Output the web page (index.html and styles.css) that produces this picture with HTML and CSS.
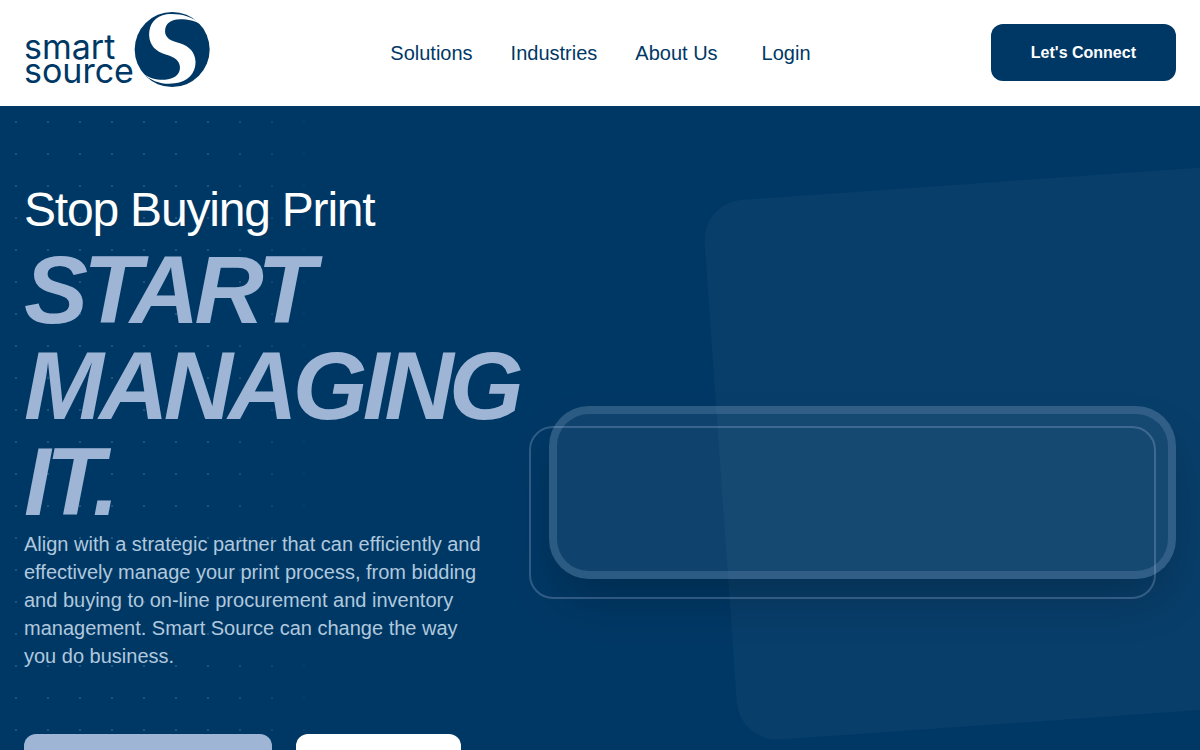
FILE: index.html
```html
<!DOCTYPE html>
<html lang="en">
<head>
<meta charset="utf-8">
<meta name="viewport" content="width=device-width, initial-scale=1">
<title>Smart Source</title>
<link rel="stylesheet" href="styles.css">
</head>
<body>
<header class="site-header">
  <a class="logo" href="#">
    <span class="wordmark"><span>smart</span><span>source</span></span>
    <svg class="mark" viewBox="402 36 228 226" aria-hidden="true">
      <circle cx="516.500" cy="149" r="113" fill="#003865"/>
      <path fill="#fff" d="M606 76C575 46 535 40 500 43C465 48 447 73 447 105C448 137 468 155 497 164C525 172 540 183 540 204C540 226 521 238 495 240C470 241 446 236 426 219C455 247 491 256 524 251C563 247 587 222 587 187C586 157 568 139 540 130C512 123 495 114 495 93C496 70 514 58 540 58C565 58 586 62 606 76Z"/>
    </svg>
  </a>
  <nav class="nav" aria-label="Main">
    <a href="#">Solutions</a>
    <a href="#">Industries</a>
    <a href="#">About Us</a>
    <a class="login" href="#">Login</a>
  </nav>
  <button class="connect" type="button">Let's Connect</button>
</header>
<main class="hero">
  <div class="dots"></div>
  <div class="tilt"></div>
  <div class="hero-grid">
    <div class="copy">
      <h1><span class="lead">Stop Buying Print</span> <em>START MANAGING IT.</em></h1>
      <p>Align with a strategic partner that can efficiently and effectively manage your print process, from bidding and buying to on-line procurement and inventory management. Smart Source can change the way you do business.</p>
      <div class="actions">
        <button class="action primary" type="button" aria-label="Let's Connect"></button>
        <button class="action secondary" type="button" aria-label="Solutions"></button>
      </div>
    </div>
    <div class="media">
      <div class="card"></div>
      <div class="frame"></div>
    </div>
  </div>
</main>
</body>
</html>
```
FILE: styles.css
```css
* { box-sizing: border-box; }
body {
  margin: 0;
  background: #003865;
  color: #003865;
  font-family: "Liberation Sans", Arial, sans-serif;
}
.site-header {
  display: flex;
  align-items: center;
  justify-content: space-between;
  padding: 12px 24px 13px;
  background: #fff;
}
.logo {
  display: flex;
  align-items: flex-start;
  padding-bottom: 6px;
  color: inherit;
  text-decoration: none;
}
.wordmark {
  display: grid;
  width: 110px;
  padding-top: 23px;
  font: 400 34px/24px Inter, sans-serif;
}
.mark { width: 76px; height: 75px; }
.nav { display: flex; gap: 38px; font-size: 20px; line-height: 28px; }
.nav a { color: inherit; text-decoration: none; }
.nav .login { margin-left: 6px; }
.connect {
  padding: 18px 40px;
  border: 0;
  border-radius: 12px;
  background: #003865;
  color: #fff;
  font: bold 16px/21px "Liberation Sans", Arial, sans-serif;
}
.hero { position: relative; overflow: hidden; padding: 80px 24px; }
.dots {
  position: absolute;
  inset: 0;
  background-image: radial-gradient(circle at 50% 50%, rgba(155, 180, 215, .22) 1px, transparent 1px);
  background-size: 32px 32px;
  mask-image: linear-gradient(to right, #000 18%, transparent 28%);
}
.tilt {
  position: absolute;
  top: 75px;
  right: -10%;
  width: 50%;
  height: 70%;
  border-radius: 40px;
  background: rgba(155, 180, 215, .05);
  transform: rotate(-4deg);
}
.hero-grid {
  position: relative;
  display: grid;
  grid-template-columns: 501fr 627fr;
  gap: 24px;
  align-items: center;
}
.copy { min-width: 0; }
h1 { margin: 0; font-weight: 400; }
.lead {
  display: block;
  margin-bottom: 8px;
  color: #fff;
  font-size: 48px;
  line-height: 48px;
  letter-spacing: -0.025em;
}
h1 em {
  display: block;
  color: #9eb5d5;
  font-size: 96px;
  font-weight: 700;
  line-height: 96px;
  letter-spacing: -0.05em;
}
.copy p {
  max-width: 464px;
  margin: 0 0 64px;
  color: #b0c8de;
  font-size: 20px;
  line-height: 28px;
}
.actions { display: flex; gap: 24px; }
.action { height: 65px; border: 0; border-radius: 12px; }
.primary { width: 248px; background: #9eb5d5; }
.secondary { width: 165px; background: #fff; }
.media { position: relative; }
.card {
  height: 173px;
  border: 8px solid rgba(155, 180, 215, .2);
  border-radius: 40px;
  background: rgba(255, 255, 255, .06);
  box-shadow: 0 25px 50px -12px rgba(0, 0, 0, .25);
}
.frame {
  position: absolute;
  inset: 20px 20px -20px -20px;
  border: 2px solid rgba(155, 180, 215, .3);
  border-radius: 24px;
}
```
